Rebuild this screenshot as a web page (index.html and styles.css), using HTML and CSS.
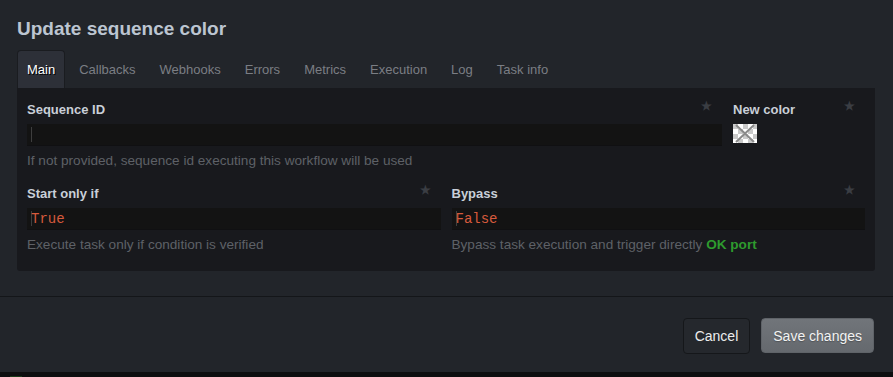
FILE: index.html
```html
<!DOCTYPE html>
<html lang="en">
<head>
    <meta charset="UTF-8">
    <meta name="viewport" content="width=device-width, initial-scale=1.0">
    <title>Update sequence color</title>
    <link rel="stylesheet" href="styles.css">
</head>
<body>
    <div class="modal">
        <div class="modal-header">
            <h1 class="modal-title">Update sequence color</h1>
        </div>

        <div class="modal-body">
            <!-- Tabs -->
            <ul class="tabs" role="tablist">
                <li class="tab active" role="tab">Main</li>
                <li class="tab" role="tab">Callbacks</li>
                <li class="tab" role="tab">Webhooks</li>
                <li class="tab" role="tab">Errors</li>
                <li class="tab" role="tab">Metrics</li>
                <li class="tab" role="tab">Execution</li>
                <li class="tab" role="tab">Log</li>
                <li class="tab" role="tab">Task info</li>
            </ul>

            <div class="tab-panel">
                <div class="field-row row-wide">
                    <div class="field">
                        <div class="field-label">
                            <span>Sequence ID</span>
                            <span class="star">&#9733;</span>
                        </div>
                        <div class="code-input"><span class="caret"></span></div>
                        <div class="help">If not provided, sequence id executing this workflow will be used</div>
                    </div>
                    <div class="field">
                        <div class="field-label">
                            <span>New color</span>
                            <span class="star">&#9733;</span>
                        </div>
                        <svg class="swatch" width="24" height="19" viewBox="0 0 24 19">
                            <defs>
                                <pattern id="checker" width="10" height="10" patternUnits="userSpaceOnUse">
                                    <rect width="10" height="10" fill="#ffffff"/>
                                    <rect width="5" height="5" fill="#c9c9c9"/>
                                    <rect x="5" y="5" width="5" height="5" fill="#c9c9c9"/>
                                </pattern>
                            </defs>
                            <rect width="24" height="19" fill="url(#checker)"/>
                            <path d="M3 1 L21 18 M21 1 L3 18" stroke="#8a8a8a" stroke-width="2"/>
                        </svg>
                    </div>
                </div>

                <div class="field-row row-half">
                    <div class="field">
                        <div class="field-label">
                            <span>Start only if</span>
                            <span class="star">&#9733;</span>
                        </div>
                        <div class="code-input"><span class="caret"></span><span class="code-value">True</span></div>
                        <div class="help">Execute task only if condition is verified</div>
                    </div>
                    <div class="field">
                        <div class="field-label">
                            <span>Bypass</span>
                            <span class="star">&#9733;</span>
                        </div>
                        <div class="code-input"><span class="caret"></span><span class="code-value">False</span></div>
                        <div class="help">Bypass task execution and trigger directly <span class="ok-port">OK port</span></div>
                    </div>
                </div>
            </div>
        </div>

        <div class="modal-footer">
            <button type="button" class="btn btn-cancel">Cancel</button>
            <button type="button" class="btn btn-save">Save changes</button>
        </div>
    </div>
    <div class="bottom-strip"><span class="strip-mark"></span></div>
</body>
</html>
```

FILE: styles.css
```css
body {
    margin: 0;
    background-color: #22252a;
    font-family: "Liberation Sans", Arial, sans-serif;
    color: #c7cdd6;
}

.modal {
    height: 372px;
    display: flex;
    flex-direction: column;
}

.modal-header {
    padding: 17px 17px 0;
}

.modal-title {
    margin: 0;
    font-size: 19px;
    line-height: 24px;
    font-weight: bold;
    color: #bcc5d1;
}

.modal-body {
    padding: 9px 18px 25px 17px;
    border-bottom: 1px solid #141619;
}

/* Tabs */
.tabs {
    list-style: none;
    margin: 0;
    padding: 0;
    display: flex;
    height: 38px;
}

.tab {
    padding: 0 9px;
    margin-right: 4px;
    line-height: 38px;
    font-size: 13px;
    color: #7b7e84;
    border: 1px solid transparent;
    border-bottom: none;
    border-radius: 4px 4px 0 0;
    box-sizing: border-box;
}

.tab.active {
    background-color: #2d3038;
    border-color: #1a1c20;
    color: #ffffff;
    text-shadow: 1px 1px 0 #000;
}

/* Panel */
.tab-panel {
    background-color: #18191d;
    padding: 14px 10px 18px;
    border-radius: 0 0 3px 3px;
}

.field-row {
    display: grid;
    gap: 11px;
}

.row-wide {
    grid-template-columns: 1fr 132px;
    margin-bottom: 17px;
}

.row-half {
    grid-template-columns: 1fr 1fr;
}

.field-label {
    display: flex;
    justify-content: space-between;
    font-size: 13px;
    font-weight: bold;
    line-height: 16px;
    color: #c9cfd8;
    margin-bottom: 6px;
}

.star {
    color: #3a3d43;
    font-size: 12px;
    line-height: 12px;
    margin-right: 10px;
    margin-top: -2px;
}

.code-input {
    height: 22px;
    background-color: #131313;
    border-bottom: 1px solid #101012;
    display: flex;
    align-items: center;
    padding-left: 4px;
    box-sizing: border-box;
}

.caret {
    width: 1px;
    height: 15px;
    background-color: #3e3e3e;
}

.code-value {
    font-family: "Liberation Mono", "DejaVu Sans Mono", monospace;
    font-size: 14px;
    color: #d65a3c;
    margin-left: -1px;
}

.help {
    margin-top: 7px;
    font-size: 13.6px;
    line-height: 16px;
    color: #5e6167;
}

.ok-port {
    color: #2e9b2e;
    font-weight: bold;
}

.swatch {
    display: block;
}

/* Footer */
.modal-footer {
    display: flex;
    justify-content: flex-end;
    gap: 11px;
    padding: 21px 19px 0 0;
}

.btn {
    height: 36px;
    padding: 0 11px;
    font-family: "Liberation Sans", Arial, sans-serif;
    font-size: 14px;
    border-radius: 4px;
    cursor: pointer;
}

.btn-cancel {
    background-color: #25282d;
    border: 1px solid #15171a;
    color: #ececec;
}

.btn-save {
    height: 35px;
    background: linear-gradient(#71757a, #65696e);
    border: 1px solid #5f6368;
    color: #f2f2f2;
    text-shadow: 0 1px 1px rgba(0, 0, 0, 0.25);
}

.bottom-strip {
    height: 5px;
    background-color: #0d0e0f;
    display: flex;
    align-items: flex-end;
}

.strip-mark {
    display: block;
    width: 12px;
    height: 1px;
    margin-left: 10px;
    background-color: #1b3a1b;
}
```
